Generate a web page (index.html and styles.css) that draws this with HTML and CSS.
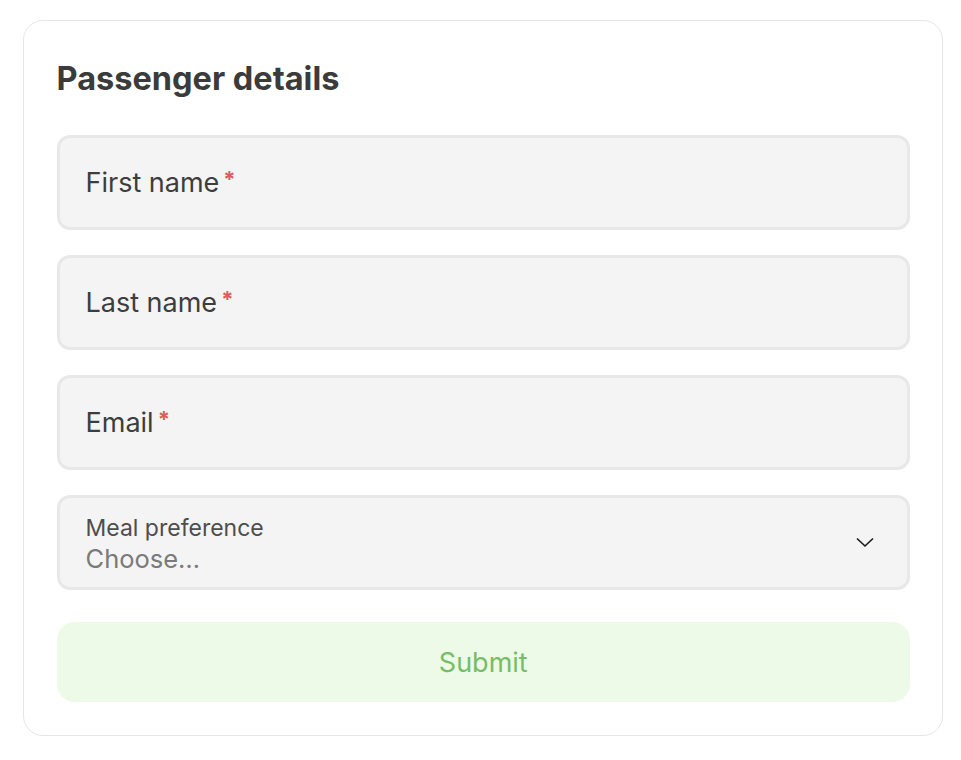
FILE: index.html
```html
<!DOCTYPE html>
<html lang="en">
<head>
<meta charset="utf-8">
<title>Passenger details</title>
<link rel="stylesheet" href="styles.css">
</head>
<body>
<form class="card">
  <h2 class="title">Passenger details</h2>
  <div class="fields">
    <label class="field"><span class="label">First name<span class="req">*</span></span></label>
    <label class="field"><span class="label">Last name<span class="req">*</span></span></label>
    <label class="field"><span class="label">Email<span class="req">*</span></span></label>
    <label class="field select">
      <span class="stack">
        <span class="small-label">Meal preference</span>
        <span class="placeholder">Choose…</span>
      </span>
      <svg class="chev" width="20" height="12" viewBox="0 0 20 12" aria-hidden="true"><path d="M2 2.5 L10 10 L18 2.5" fill="none" stroke="#1a1a1a" stroke-width="1.6"/></svg>
    </label>
  </div>
  <button type="button" class="submit">Submit</button>
</form>
</body>
</html>
```
FILE: styles.css
```css
html, body {
  margin: 0;
  background: #ffffff;
}
body {
  padding: 20px 18px 24px 23px;
  font-family: Inter, "Liberation Sans", sans-serif;
  color: #3d3d3d;
}
.card {
  box-sizing: border-box;
  width: 920px;
  height: 716px;
  border: 1.5px solid #e6e6e6;
  border-radius: 20px;
  padding: 36px 32px 0 32.5px;
  display: flex;
  flex-direction: column;
}
.title {
  margin: 0;
  font-size: 32.5px;
  line-height: 44px;
  font-weight: 700;
  color: #3b3b3b;
}
.fields {
  margin-top: 34px;
  display: flex;
  flex-direction: column;
  gap: 25px;
}
.field {
  box-sizing: border-box;
  height: 95px;
  background: #f4f4f4;
  border: 3px solid #e8e8e8;
  border-radius: 13px;
  padding: 0 26px;
  display: flex;
  align-items: center;
}
.label {
  font-size: 27px;
  color: #3d3d3d;
}
.req {
  color: #e05a5a;
  margin-left: 4px;
  font-size: 22px;
  font-weight: 700;
  position: relative;
  top: -5px;
}
.select {
  justify-content: space-between;
}
.stack {
  display: flex;
  flex-direction: column;
  padding-top: 3px;
}
.small-label {
  font-size: 23px;
  line-height: 29px;
  color: #4d4d4d;
}
.placeholder {
  font-size: 25.5px;
  line-height: 32px;
  color: #7a7a7a;
}
.chev {
  margin-right: 6px;
  margin-top: -2px;
}
.submit {
  margin-top: 32px;
  height: 80px;
  border: none;
  border-radius: 18px;
  background: #edfae8;
  color: #76bd66;
  font-family: Inter, "Liberation Sans", sans-serif;
  font-size: 27px;
}
```
